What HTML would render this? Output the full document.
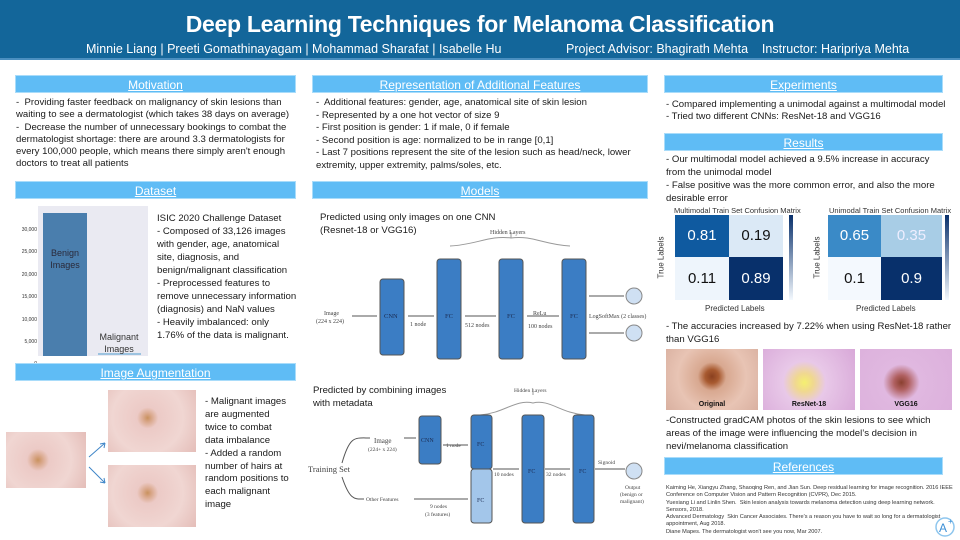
<!DOCTYPE html>
<html><head><meta charset="utf-8"><style>
*{margin:0;padding:0;box-sizing:border-box}
body{width:960px;height:540px;position:relative;background:#fff;font-family:"Liberation Sans",sans-serif;overflow:hidden;color:#1a1a1a}
.hdr{position:absolute;left:0;top:0;width:960px;height:60px;background:#13669a;border-bottom:2px solid #4a8fc0}
.t{position:absolute;left:0;width:960px;top:11px;text-align:center;color:#fff;font-size:23px;font-weight:bold;letter-spacing:-0.3px}
.sub{position:absolute;top:42px;color:#fff;font-size:12.5px}
.bar{position:absolute;height:18px;background:#5fbcf5;color:#fff;text-align:center;font-size:12px;line-height:18px;text-decoration:underline;border:1px solid #a9dcfa}
.tx{position:absolute;font-size:9.6px;line-height:12.3px;color:#1a1a1a}
.sm{position:absolute;font-size:6.2px;line-height:8.2px;color:#333}
.skin{position:absolute;background:radial-gradient(circle at 40% 50%,#c9925e 0,#d9a78a 8%,#eccac6 20%,#f0d6d2 60%,#e4bdb8 100%)}
.g{position:absolute;font-size:7px;color:#111;text-align:center;font-weight:bold}
</style></head><body>
<div class="hdr"></div>
<div class="t">Deep Learning Techniques for Melanoma Classification</div>
<div class="sub" style="left:86px">Minnie Liang | Preeti Gomathinayagam | Mohammad Sharafat | Isabelle Hu</div>
<div class="sub" style="left:566px">Project Advisor: Bhagirath Mehta&nbsp;&nbsp;&nbsp; Instructor: Haripriya Mehta</div>

<div class="bar" style="left:15px;top:75px;width:281px">Motivation</div>
<div class="tx" style="left:16px;top:97px;width:284px">-&nbsp; Providing faster feedback on malignancy of skin lesions than waiting to see a dermatologist (which takes 38 days on average)<br>-&nbsp; Decrease the number of unnecessary bookings to combat the dermatologist shortage: there are around 3.3 dermatologists for every 100,000 people, which means there simply aren't enough doctors to treat all patients</div>

<div class="bar" style="left:15px;top:181px;width:281px">Dataset</div>
<div style="position:absolute;left:38px;top:206px;width:110px;height:150px;background:#eaeaf2"></div>
<div style="position:absolute;left:43px;top:213px;width:44px;height:143px;background:#4a7ead"></div>
<div style="position:absolute;left:98px;top:353px;width:43px;height:2px;background:#9cc3e0"></div>
<div class="sm" style="left:18px;top:219px;font-size:5px;line-height:22.4px;text-align:right;width:19px">30,000<br>25,000<br>20,000<br>15,000<br>10,000<br>5,000<br>0</div>
<div style="position:absolute;left:43px;top:247px;width:44px;font-size:9px;color:#2a2a3a;text-align:center;line-height:12px">Benign Images</div>
<div style="position:absolute;left:94px;top:331px;width:50px;font-size:9px;color:#333;text-align:center;line-height:12px">Malignant Images</div>
<div class="tx" style="left:157px;top:212px;width:140px;line-height:13px">ISIC 2020 Challenge Dataset<br>- Composed of 33,126 images with gender, age, anatomical site, diagnosis, and benign/malignant classification<br>- Preprocessed features to remove unnecessary information (diagnosis) and NaN values<br>- Heavily imbalanced: only 1.76% of the data is malignant.</div>

<div class="bar" style="left:15px;top:363px;width:281px">Image Augmentation</div>
<div class="skin" style="left:6px;top:432px;width:80px;height:56px"></div>
<div class="skin" style="left:108px;top:390px;width:88px;height:62px;background:radial-gradient(circle at 45% 45%,#c9925e 0,#d9a78a 7%,#eccac6 18%,#f0d6d2 60%,#e4bdb8 100%)"></div>
<div class="skin" style="left:108px;top:465px;width:88px;height:62px;background:radial-gradient(circle at 45% 45%,#c9925e 0,#d9a78a 7%,#eccac6 18%,#f0d6d2 60%,#e4bdb8 100%)"></div>
<svg style="position:absolute;left:86px;top:440px" width="24" height="50"><path d="M3 17 L19 3 M3 27 L19 43" stroke="#3f86c8" stroke-width="1"/><path d="M19 3 l-5 1 M19 3 l-1 5 M19 43 l-5 -1 M19 43 l-1 -5" stroke="#3f86c8"/></svg>
<div class="tx" style="left:205px;top:396px;width:84px;line-height:12.9px">- Malignant images are augmented twice to combat data imbalance<br>- Added a random number of hairs at random positions to each malignant image</div>

<div class="bar" style="left:312px;top:75px;width:336px">Representation of Additional Features</div>
<div class="tx" style="left:316px;top:97px;width:330px;line-height:12.5px">-&nbsp; Additional features: gender, age, anatomical site of skin lesion<br>- Represented by a one hot vector of size 9<br>- First position is gender: 1 if male, 0 if female<br>- Second position is age: normalized to be in range [0,1]<br>- Last 7 positions represent the site of the lesion such as head/neck, lower extremity, upper extremity, palms/soles, etc.</div>

<div class="bar" style="left:312px;top:181px;width:336px">Models</div>
<div class="tx" style="left:320px;top:211px;line-height:13px">Predicted using only images on one CNN<br>(Resnet-18 or VGG16)</div>
<svg style="position:absolute;left:300px;top:220px" width="360" height="145" font-family="Liberation Serif,serif" font-size="6" fill="#444">
<text x="190" y="14">Hidden Layers</text>
<path d="M211 18 V12 M150 26 C175 25 190 15 211 18 C232 15 245 25 270 26" stroke="#999" fill="none"/>
<rect x="80" y="59" width="24" height="76" rx="3" fill="#3b7dc4" stroke="#555"/>
<rect x="137" y="39" width="24" height="100" rx="3" fill="#3b7dc4" stroke="#555"/>
<rect x="199" y="39" width="24" height="100" rx="3" fill="#3b7dc4" stroke="#555"/>
<rect x="262" y="39" width="24" height="100" rx="3" fill="#3b7dc4" stroke="#555"/>
<g fill="#1a2a50" font-size="6.5"><text x="84" y="98">CNN</text><text x="145" y="98">FC</text><text x="207" y="98">FC</text><text x="270" y="98">FC</text></g>
<text x="24" y="95">Image</text><text x="16" y="103">(224 x 224)</text>
<text x="110" y="106">1 node</text><text x="165" y="107">512 nodes</text><text x="233" y="95">ReLu</text><text x="228" y="108">100 nodes</text><text x="289" y="98">LogSoftMax (2 classes)</text>
<path d="M52 96 H77 M108 96 H134 M165 96 H196 M227 96 H259 M289 76 H324 M289 113 H324" stroke="#555"/>
<circle cx="334" cy="76" r="8" fill="#cfe0f3" stroke="#888"/><circle cx="334" cy="113" r="8" fill="#cfe0f3" stroke="#888"/>
</svg>
<div class="tx" style="left:313px;top:384px;line-height:13px">Predicted by combining images<br>with metadata</div>
<svg style="position:absolute;left:300px;top:375px" width="360" height="165" font-family="Liberation Serif,serif" font-size="5.5" fill="#444">
<text x="214" y="17">Hidden Layers</text>
<path d="M233 20 V14 M180 40 C205 38 215 24 233 28 C250 24 260 38 285 40" stroke="#999" fill="none"/>
<rect x="119" y="41" width="22" height="48" rx="3" fill="#3b7dc4" stroke="#555"/>
<rect x="171" y="40" width="21" height="54" rx="3" fill="#3b7dc4" stroke="#555"/>
<rect x="171" y="94" width="21" height="54" rx="3" fill="#a3c6ea" stroke="#555"/>
<rect x="222" y="40" width="22" height="108" rx="3" fill="#3b7dc4" stroke="#555"/>
<rect x="273" y="40" width="21" height="108" rx="3" fill="#3b7dc4" stroke="#555"/>
<g fill="#1a2a50" font-size="6"><text x="121" y="67">CNN</text><text x="177" y="71">FC</text><text x="177" y="127">FC</text><text x="228" y="98">FC</text><text x="279" y="98">FC</text></g>
<text x="8" y="97" font-size="8.5">Training Set</text>
<text x="74" y="68" font-size="7">Image</text><text x="68" y="76">(224+ x 224)</text>
<text x="66" y="126">Other Features</text>
<text x="146" y="72">1 node</text><text x="194" y="101">10 nodes</text><text x="246" y="101">32 nodes</text><text x="298" y="89">Signoid</text>
<text x="130" y="133">9 nodes</text><text x="125" y="141">(3 features)</text>
<text x="325" y="114">Output</text><text x="320" y="121">(benign or</text><text x="320" y="128">malignant)</text>
<path d="M42 88 C50 60 55 63 70 63 M42 102 C50 126 55 124 64 124 M104 63 H116 M143 70 H168 M114 124 H168 M193 94 H219 M245 94 H270 M295 94 H325" stroke="#555" fill="none"/>
<circle cx="334" cy="96" r="8" fill="#cfe0f3" stroke="#888"/>
</svg>

<div class="bar" style="left:664px;top:75px;width:279px">Experiments</div>
<div class="tx" style="left:666px;top:99px;width:290px">- Compared implementing a unimodal against a multimodal model<br>- Tried two different CNNs: ResNet-18 and VGG16</div>
<div class="bar" style="left:664px;top:133px;width:279px">Results</div>
<div class="tx" style="left:666px;top:153px;width:280px;line-height:13px">- Our multimodal model achieved a 9.5% increase in accuracy from the unimodal model<br>- False positive was the more common error, and also the more desirable error</div>
<div style="position:absolute;left:674px;top:206px;font-size:7.5px;color:#333">Multimodal Train Set Confusion Matrix</div>
<div style="position:absolute;left:829px;top:206px;font-size:7.5px;color:#333">Unimodal Train Set Confusion Matrix</div>
<div style="position:absolute;left:675px;top:215px;width:54px;height:42px;background:#0f5aa0;color:#fff;font-size:15px;text-align:center;line-height:42px">0.81</div>
<div style="position:absolute;left:729px;top:215px;width:54px;height:42px;background:#dbe9f6;color:#111;font-size:15px;text-align:center;line-height:42px">0.19</div>
<div style="position:absolute;left:675px;top:257px;width:54px;height:43px;background:#eef5fc;color:#111;font-size:15px;text-align:center;line-height:43px">0.11</div>
<div style="position:absolute;left:729px;top:257px;width:54px;height:43px;background:#08306b;color:#fff;font-size:15px;text-align:center;line-height:43px">0.89</div>
<div style="position:absolute;left:828px;top:215px;width:53px;height:42px;background:#3a8ac7;color:#fff;font-size:15px;text-align:center;line-height:42px">0.65</div>
<div style="position:absolute;left:881px;top:215px;width:61px;height:42px;background:#a8cde6;color:#eef;font-size:15px;text-align:center;line-height:42px">0.35</div>
<div style="position:absolute;left:828px;top:257px;width:53px;height:43px;background:#f4f9fe;color:#111;font-size:15px;text-align:center;line-height:43px">0.1</div>
<div style="position:absolute;left:881px;top:257px;width:61px;height:43px;background:#08306b;color:#fff;font-size:15px;text-align:center;line-height:43px">0.9</div>
<div style="position:absolute;left:789px;top:215px;width:4px;height:85px;background:linear-gradient(#08306b,#f4f9fe)"></div>
<div style="position:absolute;left:945px;top:215px;width:4px;height:85px;background:linear-gradient(#08306b,#f4f9fe)"></div>
<div style="position:absolute;left:705px;top:304px;font-size:8px;color:#333">Predicted Labels</div>
<div style="position:absolute;left:856px;top:304px;font-size:8px;color:#333">Predicted Labels</div>
<div style="position:absolute;left:640px;top:253px;font-size:8px;color:#333;transform:rotate(-90deg)">True Labels</div>
<div style="position:absolute;left:796px;top:253px;font-size:8px;color:#333;transform:rotate(-90deg)">True Labels</div>
<div class="tx" style="left:666px;top:320px;width:290px;line-height:13px">- The accuracies increased by 7.22% when using ResNet-18 rather than VGG16</div>
<div class="skin" style="left:666px;top:349px;width:92px;height:61px;background:radial-gradient(circle at 50% 45%,#8a4020 0,#a85a30 12%,#d8a890 25%,#e8c4b4 60%,#d9b0a0 100%)"></div>
<div class="skin" style="left:763px;top:349px;width:92px;height:61px;background:radial-gradient(circle at 45% 55%,#f5f070 0,#f0d890 15%,#e8c8e8 35%,#d8a8d8 100%)"></div>
<div class="skin" style="left:860px;top:349px;width:92px;height:61px;background:radial-gradient(circle at 45% 55%,#8a4030 0,#b06060 12%,#e0b8e0 30%,#dcb0dc 100%)"></div>
<div class="g" style="left:666px;top:401px;width:92px">Original</div>
<div class="g" style="left:763px;top:401px;width:92px">ResNet-18</div>
<div class="g" style="left:860px;top:401px;width:92px">VGG16</div>
<div class="tx" style="left:666px;top:414px;width:290px;line-height:13px">-Constructed gradCAM photos of the skin lesions to see which areas of the image were influencing the model’s decision in nevi/melanoma classification</div>
<div class="bar" style="left:664px;top:457px;width:279px">References</div>
<div class="sm" style="left:666px;top:485px;width:290px;font-size:5.6px;line-height:7.3px">Kaiming He, Xiangyu Zhang, Shaoqing Ren, and Jian Sun. Deep residual learning for image recognition. 2016 IEEE Conference on Computer Vision and Pattern Recognition (CVPR), Dec 2015.<br>Yuexiang Li and Linlin Shen.&nbsp; Skin lesion analysis towards melanoma detection using deep learning network. Sensors, 2018.<br>Advanced Dermatology&nbsp; Skin Cancer Associates. There's a reason you have to wait so long for a dermatologist appointment, Aug 2018.<br>Diane Mapes. The dermatologist won't see you now, Mar 2007.</div>
<svg style="position:absolute;left:934px;top:515px" width="22" height="22"><circle cx="11" cy="12" r="9" fill="none" stroke="#8ec6ee" stroke-width="1.5"/><text x="5" y="17" font-size="12" fill="#3c8fd6" font-family="Liberation Sans">A</text><text x="14" y="9" font-size="8" fill="#3c8fd6">+</text></svg>
</body></html>
